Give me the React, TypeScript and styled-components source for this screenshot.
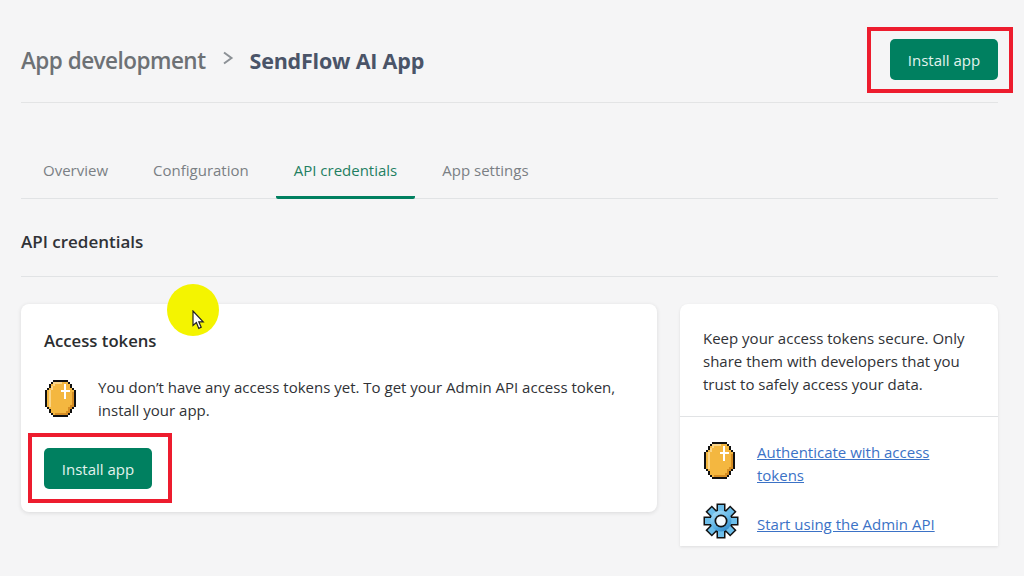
import React from 'react';
import styled, { createGlobalStyle } from 'styled-components';

const GlobalStyle = createGlobalStyle`
  html, body {
    margin: 0;
    padding: 0;
    background: #f5f5f6;
  }
`;

const Coin = () => (
  <svg width="31" height="37" viewBox="0 0 16 18" preserveAspectRatio="none" shapeRendering="crispEdges" display="block">
    <path
      fill="#111"
      d="M4 0H12V1H13V2H14V4H15V5H16V13H15V14H14V16H13V17H12V18H4V17H3V16H2V14H1V13H0V5H1V4H2V2H3V1H4Z"
    />
    <path
      fill="#f4b740"
      d="M4 1H12V2H13V4H14V5H15V13H14V14H13V16H12V17H4V16H3V14H2V13H1V5H2V4H3V2H4Z"
    />
    <path fill="#fbd689" d="M4 1H9V2H5V3H4V5H3V13H2V5H3V3H4Z" />
    <path fill="#d58c22" d="M14 6H15V13H14V14H13V16H12V17H5V16H11V15H12V13H13V12H14Z" />
    <path fill="#ffffff" d="M10 2H11V5H13V6H11V9H10V6H8V5H10Z" />
  </svg>
);

const GEAR_TEETH = [0, 45, 90, 135, 180, 225, 270, 315];

const Gear = () => (
  <GearIcon width="36" height="36" viewBox="0 0 36 36">
    <defs>
      <linearGradient id="gearBlue" x1="0.2" y1="0" x2="0.8" y2="1">
        <stop offset="0" stopColor="#a5dbf5" />
        <stop offset="0.55" stopColor="#5db4e6" />
        <stop offset="1" stopColor="#2f86c5" />
      </linearGradient>
    </defs>
    {GEAR_TEETH.map(a => (
      <rect key={a} x="13.5" y="0.5" width="9" height="11" fill="#111" transform={`rotate(${a} 18 18)`} />
    ))}
    <circle cx="18" cy="18" r="12" fill="#111" />
    {GEAR_TEETH.map(a => (
      <rect key={a} x="15" y="2" width="6" height="10" fill="#6dbeea" transform={`rotate(${a} 18 18)`} />
    ))}
    <circle cx="18" cy="18" r="10.5" fill="url(#gearBlue)" />
    <circle cx="18" cy="18" r="6.5" fill="#111" />
    <circle cx="18" cy="18" r="4.8" fill="#f4fbff" />
  </GearIcon>
);

const App = () => (
  <Page>
    <GlobalStyle />
    <Header>
      <Crumbs>
        <Parent>App development</Parent>
        <Chevron width="12" height="14" viewBox="0 0 12 14">
          <path d="M2 1.5 L9.5 7 L2 12.5" fill="none" stroke="#8c9196" strokeWidth="2" />
        </Chevron>
        <Current>SendFlow AI App</Current>
      </Crumbs>
      <Marked>
        <InstallButton>Install app</InstallButton>
        <RedBox $top={12} $right={15} $bottom={13} $left={23} />
      </Marked>
    </Header>

    <Tabs>
      <Tab>Overview</Tab>
      <Tab>Configuration</Tab>
      <Tab $active>API credentials</Tab>
      <Tab>App settings</Tab>
    </Tabs>

    <SectionHeading>API credentials</SectionHeading>

    <Columns>
      <MainCard>
        <CardTitle>Access tokens</CardTitle>
        <Notice>
          <IconSlot>
            <Coin />
          </IconSlot>
          <Body>
            You don’t have any access tokens yet. To get your Admin API access token, install your app.
          </Body>
        </Notice>
        <Marked>
          <InstallButton>Install app</InstallButton>
          <RedBox $top={15} $right={20} $bottom={14} $left={16} />
        </Marked>
      </MainCard>

      <SideCard>
        <SideIntro>
          <Body>
            Keep your access tokens secure. Only share them with developers that you trust to safely access your data.
          </Body>
        </SideIntro>
        <Links>
          <LinkRow>
            <LinkIcon $top={1}>
              <Coin />
            </LinkIcon>
            <DocLink href="#">Authenticate with access tokens</DocLink>
          </LinkRow>
          <LinkRow>
            <LinkIcon>
              <Gear />
            </LinkIcon>
            <DocLink href="#" $top={10}>
              Start using the Admin API
            </DocLink>
          </LinkRow>
        </Links>
      </SideCard>
    </Columns>

    <Spotlight>
      <svg width="13" height="20" viewBox="0 0 13 20">
        <path
          d="M1 1 V15.5 L4.4 12.6 L6.8 18.4 L9.2 17.3 L6.8 11.8 H11.2 Z"
          fill="#fff"
          stroke="#222"
          strokeWidth="1.2"
        />
      </svg>
    </Spotlight>
  </Page>
);

export default App;

const Page = styled.div`
  position: relative;
  width: 1024px;
  height: 576px;
  box-sizing: border-box;
  padding: 0 26px 0 21px;
  overflow: hidden;
  background: #f5f5f6;
  font-family: 'Open Sans', 'Noto Sans', sans-serif;
  color: #202223;
`;

const Header = styled.header`
  display: flex;
  align-items: center;
  justify-content: space-between;
  box-sizing: border-box;
  height: 103px;
  padding-top: 17px;
  border-bottom: 1px solid #e3e4e5;
`;

const Crumbs = styled.div`
  display: flex;
  align-items: baseline;
  gap: 16px;
  margin-top: 2px;
`;

const Chevron = styled.svg`
  align-self: center;
  margin-top: -5px;
`;

const Parent = styled.span`
  font-size: 22.5px;
  font-weight: 600;
  color: #6d7175;
  letter-spacing: -0.52px;
`;

const Current = styled.span`
  font-size: 21.5px;
  font-weight: 700;
  color: #4a5468;
  letter-spacing: -0.2px;
`;

const Marked = styled.div`
  position: relative;
  display: inline-flex;
`;

const RedBox = styled.div<{ $top: number; $right: number; $bottom: number; $left: number }>`
  position: absolute;
  top: ${p => -p.$top}px;
  right: ${p => -p.$right}px;
  bottom: ${p => -p.$bottom}px;
  left: ${p => -p.$left}px;
  border: 4px solid #ed1c2e;
  pointer-events: none;
`;

const InstallButton = styled.button`
  width: 108px;
  height: 41px;
  padding: 0;
  border: none;
  border-radius: 5px;
  background: #008060;
  color: #e3f3ee;
  font-family: inherit;
  font-size: 15px;
`;

const Tabs = styled.nav`
  display: flex;
  gap: 9px;
  box-sizing: border-box;
  height: 96px;
  padding: 49px 0 0 4px;
  border-bottom: 1px solid #e1e3e5;
`;

const Tab = styled.div<{ $active?: boolean }>`
  box-sizing: border-box;
  height: 47px;
  padding: 7px 18px 0;
  margin-bottom: -1px;
  border-bottom: 3px solid ${p => (p.$active ? '#008060' : 'transparent')};
  border-radius: 0 0 2px 2px;
  font-size: 15px;
  line-height: 22px;
  color: ${p => (p.$active ? '#1f7f62' : '#7a7f84')};
`;

const SectionHeading = styled.h2`
  box-sizing: border-box;
  height: 78px;
  margin: 0;
  padding-top: 31px;
  border-bottom: 1px solid #e1e3e5;
  font-size: 17px;
  line-height: 24px;
  font-weight: 600;
  color: #303236;
`;

const Columns = styled.div`
  display: grid;
  grid-template-columns: 636px 318px;
  gap: 23px;
  align-items: start;
  padding-top: 27px;
`;

const MainCard = styled.section`
  box-sizing: border-box;
  height: 208px;
  padding: 25px 23px;
  border-radius: 8px;
  background: #fff;
  box-shadow: 0 1px 4px rgba(23, 24, 24, 0.12);
`;

const CardTitle = styled.h3`
  margin: 0 0 23px;
  font-size: 16.7px;
  line-height: 24px;
  font-weight: 600;
  color: #2b2d30;
`;

const Notice = styled.div`
  display: flex;
  gap: 22px;
  margin-bottom: 26px;
`;

const IconSlot = styled.div`
  flex: none;
  margin: 4px 0 0 1px;
`;

const Body = styled.p`
  margin: 0;
  font-size: 15px;
  line-height: 23px;
  color: #303236;
`;

const SideCard = styled.aside`
  box-sizing: border-box;
  height: 242px;
  overflow: hidden;
  border-radius: 8px 8px 0 0;
  background: #fff;
  box-shadow: 0 1px 3px rgba(23, 24, 24, 0.1);
`;

const SideIntro = styled.div`
  box-sizing: border-box;
  height: 113px;
  padding: 23px 23px 0;
  border-bottom: 1px solid #e1e3e5;
`;

const Links = styled.div`
  display: flex;
  flex-direction: column;
  gap: 16px;
  padding: 24px 23px 0 24px;
`;

const LinkRow = styled.div`
  display: flex;
  align-items: flex-start;
  gap: 21px;
`;

const LinkIcon = styled.div<{ $top?: number }>`
  flex: none;
  width: 32px;
  margin-top: ${p => p.$top ?? 0}px;
`;

const GearIcon = styled.svg`
  display: block;
  margin-left: -1px;
`;

const DocLink = styled.a<{ $top?: number }>`
  width: 190px;
  margin-top: ${p => p.$top ?? 0}px;
  font-size: 15px;
  line-height: 23px;
  color: #3b72c6;
  text-decoration: underline;
`;

const Spotlight = styled.div`
  position: absolute;
  top: 284px;
  left: 167px;
  box-sizing: border-box;
  width: 52px;
  height: 52px;
  padding: 26px 0 0 25px;
  border-radius: 50%;
  background: #f4f400;
  line-height: 0;
`;
